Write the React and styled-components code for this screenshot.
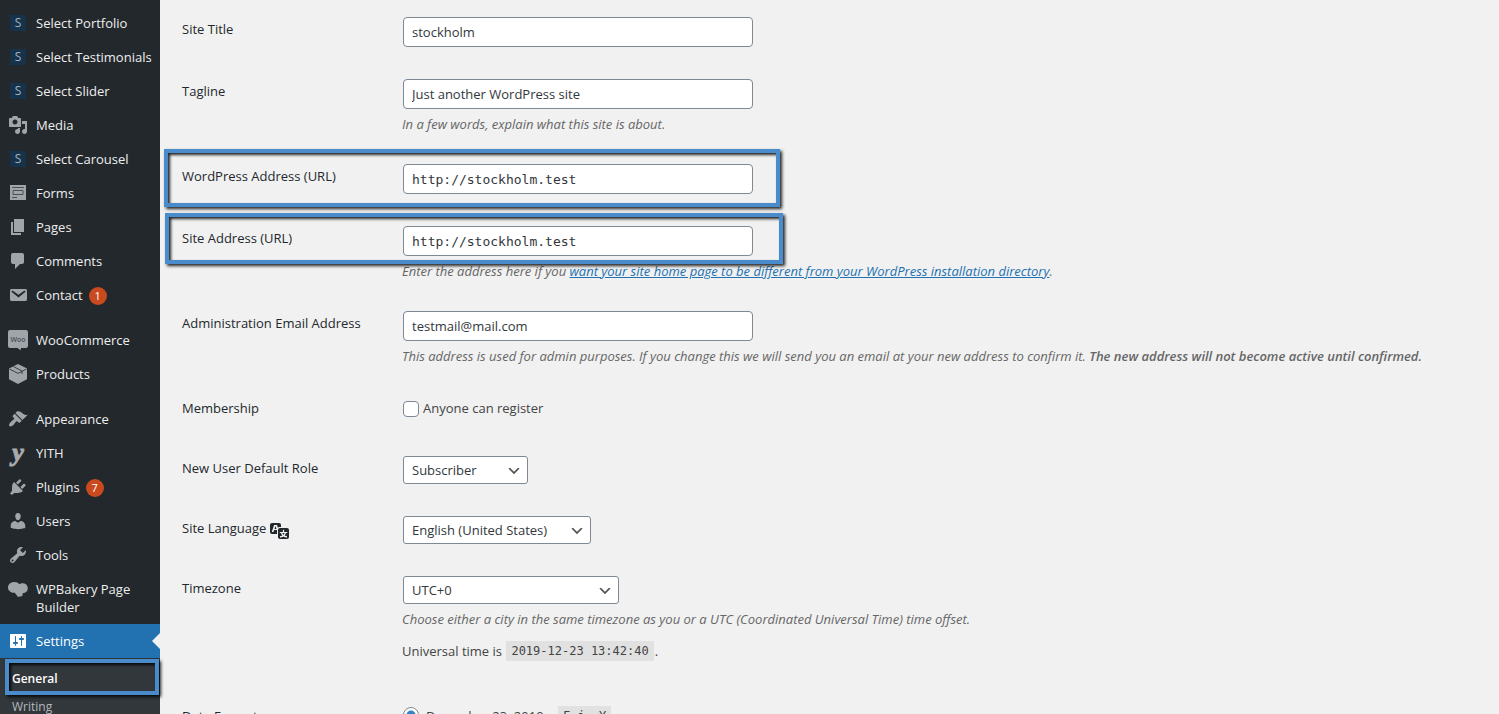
import React from 'react'
import styled, { createGlobalStyle, css } from 'styled-components'

const GlobalStyle = createGlobalStyle`
    *, *::before, *::after {
        box-sizing: border-box;
    }
    body {
        margin: 0;
        background: #f1f1f1;
        color: #444;
        font-family: "Open Sans", "Noto Sans", sans-serif;
        font-size: 13px;
        line-height: 18px;
    }
`;

const Page = styled.div`
    display: flex;
    height: 100vh;
    overflow: hidden;
`;

/* Sidebar */

const Sidebar = styled.nav`
    flex: 0 0 160px;
    padding-top: 6px;
    background: #23282d;
`;

const MenuList = styled.ul`
    margin: 0;
    padding: 0;
    list-style: none;
`;

const MenuItem = styled.li`
    margin-top: ${({$separated}) => ($separated ? "11px" : "0")};
`;

const MenuLink = styled.a`
    position: relative;
    display: flex;
    align-items: flex-start;
    padding: 8px 4px 8px 8px;
    color: ${({$active}) => ($active ? "#fff" : "#eee")};
    background: ${({$active}) => ($active ? "#2271b1" : "transparent")};
    text-decoration: none;
    ${({$active}) => $active && css`
        &::after {
            content: "";
            position: absolute;
            top: 9px;
            right: 0;
            border: 8px solid transparent;
            border-right-color: #f1f1f1;
            border-left-width: 0;
        }
    `}
`;

const MenuIcon = styled.span`
    display: flex;
    align-items: center;
    justify-content: center;
    flex: 0 0 20px;
    height: 18px;
    margin-right: 8px;
    color: ${({$active}) => ($active ? "#fff" : "#a0a5aa")};
`;

const SelectLogo = styled.span`
    width: 16px;
    height: 16px;
    background: #17324b;
    color: #a3b3bf;
    font-size: 12px;
    line-height: 16px;
    text-align: center;
`;

const YithLogo = styled.span`
    color: #a8abad;
    font-family: "Liberation Serif", serif;
    font-size: 26px;
    font-style: italic;
    font-weight: 700;
    line-height: 12px;
    -webkit-text-stroke: 1px #a8abad;
`;

const Badge = styled.span`
    flex: 0 0 18px;
    height: 18px;
    margin: 1px 0 -1px 6px;
    border-radius: 9px;
    background: #ca4a1f;
    color: #fff;
    font-size: 11px;
    line-height: 18px;
    text-align: center;
`;

const SubMenu = styled.ul`
    margin: 0;
    padding: 7px 0 8px;
    background: #32373c;
    list-style: none;
`;

const SubItem = styled.li`
    position: relative;
`;

const SubLink = styled.a`
    display: block;
    padding: 5px 12px;
    color: ${({$active}) => ($active ? "#fff" : "#b4b9be")};
    font-size: 12px;
    font-weight: ${({$active}) => ($active ? 600 : 400)};
    text-decoration: none;
`;

/* Frame laid over the parts that the reader has to look at */
const Highlight = styled.span`
    position: absolute;
    top: ${({$top}) => $top}px;
    left: ${({$left}) => $left}px;
    width: ${({$width}) => $width}px;
    height: ${({$height}) => $height}px;
    border: 4px solid #4a8bcb;
    box-shadow: 2px 2px 3px rgba(0, 0, 0, 0.85), inset 2px 2px 3px rgba(0, 0, 0, 0.85);
    pointer-events: none;
`;

/* Settings form */

const Form = styled.form`
    flex: 1;
    min-width: 0;
    padding: 1px 20px 0 22px;
`;

const Row = styled.div`
    position: relative;
    display: grid;
    grid-template-columns: 220px 1fr;
    padding: 15px 0;
`;

const Heading = styled.div`
    display: flex;
    align-items: flex-start;
    height: 17px;
    margin-top: 5px;
    color: #23282d;
    font-weight: 500;
    line-height: 17px;

    svg {
        flex: 0 0 20px;
        margin-left: 4px;
    }
`;

const Field = styled.div`
    min-width: 0;
    min-height: 30px;
`;

const TextInput = styled.input`
    display: block;
    width: 350px;
    max-width: 100%;
    height: 30px;
    margin: 1px;
    padding: 0 8px;
    border: 1px solid #7e8993;
    border-radius: 4px;
    background: #fff;
    color: #32373c;
    font-family: ${({$code}) => ($code ? '"DejaVu Sans Mono", monospace' : "inherit")};
    font-size: 13px;
`;

const Select = styled.select`
    display: block;
    width: ${({$width}) => $width}px;
    height: 28px;
    margin: 1px;
    padding: 0 24px 0 8px;
    appearance: none;
    border: 1px solid #7e8993;
    border-radius: 3px;
    background: #fff url('data:image/svg+xml;utf8,<svg xmlns="http://www.w3.org/2000/svg" viewBox="0 0 20 20"><path d="M5 6l5 5 5-5 2 1-7 7-7-7 2-1z" fill="%23555"/></svg>') no-repeat right 5px top 55%;
    background-size: 16px 16px;
    color: #32373c;
    font-family: inherit;
    font-size: 13px;
`;

const Description = styled.p`
    margin: 7px 0 0;
    color: #666;
    font-style: italic;
    line-height: 17px;

    a {
        color: #2271b1;
    }
    strong {
        font-weight: 600;
    }
`;

const TimeInfo = styled.p`
    margin: 13px 0 12px;
    line-height: 20px;
`;

const Code = styled.code`
    display: inline-block;
    height: 20px;
    margin: 0 1px;
    padding: 0 5px;
    background: #e1e1e1;
    font-family: "DejaVu Sans Mono", monospace;
    font-size: 12px;
    line-height: 20px;
    vertical-align: top;
`;

const Option = styled.label`
    display: flex;
    align-items: flex-start;
    padding-top: 3px;
    line-height: 20px;
`;

const Check = styled.input`
    width: 16px;
    height: 16px;
    margin: 3px 4px 0 1px;
    appearance: none;
    border: 1px solid #7e8993;
    border-radius: 4px;
    background: #fff;
`;

const Radio = styled(Check)`
    margin: 1px 7px 0 1px;
    border-radius: 50%;
    &:checked {
        background: radial-gradient(circle, #3582c4 4px, #fff 5px);
    }
`;

const DateText = styled.span`
    width: 131px;
`;

/* Icons */

const Icon = ({ children }) => (
    <svg width="20" height="20" viewBox="0 0 20 20" fill="currentColor" overflow="visible" aria-hidden="true">{children}</svg>
);

const icons = {
    select: <SelectLogo>S</SelectLogo>,
    yith: <YithLogo>y</YithLogo>,
    media: <Icon><path d="M13 11V4c0-.55-.45-1-1-1h-1.67L9 1H5L3.67 3H2c-.55 0-1 .45-1 1v7c0 .55.45 1 1 1h10c.55 0 1-.45 1-1zM7 4.5c1.38 0 2.5 1.12 2.5 2.5S8.38 9.5 7 9.5 4.5 8.38 4.5 7 5.62 4.5 7 4.5zM14 6h5v10.5c0 1.38-1.12 2.5-2.5 2.5S14 17.88 14 16.5s1.12-2.5 2.5-2.5c.17 0 .34.02.5.05V9h-3V6zm-4 8.05V13h2v3.5c0 1.38-1.12 2.5-2.5 2.5S7 17.88 7 16.5 8.12 14 9.5 14c.17 0 .34.02.5.05z" /></Icon>,
    forms: (
        <Icon>
            <path d="M2 2h16v15H2z" />
            <path d="M4 4.5h12M4 14.5h5" stroke="#4b5056" />
            <path d="M5 7.5h10v4H5z" fill="none" stroke="#4b5056" />
        </Icon>
    ),
    page: <Icon><path d="M6 15V2h10v13H6zm-1 1h8v2H3V5h2v11z" /></Icon>,
    comments: <Icon><path d="M5 2h9c1.1 0 2 .9 2 2v7c0 1.1-.9 2-2 2h-2l-5 5v-5H5c-1.1 0-2-.9-2-2V4c0-1.1.9-2 2-2z" /></Icon>,
    email: <Icon><path d="M3.87 4h13.25C18.37 4 19 4.59 19 5.79v8.42c0 1.19-.63 1.79-1.88 1.79H3.87c-1.25 0-1.88-.6-1.88-1.79V5.79c0-1.2.63-1.79 1.88-1.79zm6.62 8.6l6.74-5.53c.24-.2.43-.66.13-1.07-.29-.41-.82-.42-1.17-.17l-5.7 3.86L4.8 5.83c-.35-.25-.88-.24-1.17.17-.3.41-.11.87.13 1.07z" /></Icon>,
    woo: (
        <Icon>
            <path d="M2 0h16a2 2 0 0 1 2 2v14a2 2 0 0 1-2 2h-5l-.5 2.2L9.500 18H2a2 2 0 0 1-2-2V2a2 2 0 0 1 2-2z" />
            <text x="10" y="12" textAnchor="middle" fill="#4b5056" fontFamily="Open Sans" fontSize="7" fontWeight="600">Woo</text>
        </Icon>
    ),
    products: (
        <Icon>
            <path d="M10 0l9 4.6v10.6L10 20l-9-4.8V4.6z" />
            <path d="M1.500 5L10 9.400 18.500 5M5.500 2.600L14 7v3" fill="none" stroke="#3c4146" />
        </Icon>
    ),
    appearance: <Icon><path d="M14.48 11.06L7.41 3.99l1.5-1.5c.5-.56 2.3-.47 3.51.32 1.21.8 1.43 1.28 2.91 2.1 1.18.64 2.45 1.26 4.45.85zm-.71.71L6.7 4.7 4.93 6.47c-.39.39-.39 1.02 0 1.41l1.06 1.06c.39.39.39 1.03 0 1.42-.6.6-1.43 1.11-2.21 1.69-.35.26-.7.53-1.01.84C1.43 14.23.4 16.08 1.4 17.07c.99 1 2.84-.03 4.18-1.36.31-.31.58-.66.85-1.02.57-.78 1.08-1.61 1.69-2.21.39-.39 1.02-.39 1.41 0l1.06 1.06c.39.39 1.02.39 1.41 0z" /></Icon>,
    plugins: <Icon><path d="M13.11 4.36L9.87 7.6 8 5.73l3.24-3.24c.35-.34 1.05-.2 1.56.32.52.51.66 1.21.31 1.55zm-8 1.77l.91-1.12 9.01 9.01-1.19.84c-.71.71-2.63 1.16-3.82 1.16H6.14L4.9 17.26c-.59.59-1.54.59-2.12 0-.59-.58-.59-1.53 0-2.12l1.24-1.24v-3.88c0-1.13.4-3.19 1.09-3.89zm7.26 3.97l3.24-3.24c.34-.35 1.04-.21 1.55.31.52.51.66 1.21.31 1.55l-3.24 3.25z" /></Icon>,
    users: <Icon><path d="M10 9.25c-2.27 0-2.73-3.44-2.73-3.44C7 4.02 7.82 2 9.97 2c2.16 0 2.98 2.02 2.71 3.81 0 0-.41 3.44-2.68 3.44zm0 2.57L12.72 10c2.39 0 4.52 2.33 4.52 4.53v2.49s-3.65 1.13-7.24 1.13c-3.65 0-7.24-1.13-7.24-1.13v-2.49c0-2.25 1.94-4.48 4.47-4.48z" /></Icon>,
    tools: <Icon><path d="M16.68 9.77c-1.34 1.34-3.3 1.67-4.95.99l-5.41 6.52c-.99.99-2.59.99-3.58 0s-.99-2.59 0-3.57l6.52-5.42c-.68-1.65-.35-3.61.99-4.95 1.28-1.28 3.12-1.62 4.72-1.06l-2.89 2.89 2.82 2.82 2.86-2.87c.53 1.58.18 3.39-1.08 4.65zM3.81 16.21c.4.39 1.04.39 1.43 0 .4-.4.4-1.04 0-1.43-.39-.4-1.03-.4-1.43 0-.39.39-.39 1.03 0 1.43z" /></Icon>,
    bakery: <Icon><path d="M6.500 3c2 0 3.700.7 4.800 2.200.9-.6 1.900-.9 3-.9 3.200 0 5.500 2 5.500 4.900 0 2.700-2 4.800-5 5.100l-.5 2.700c-1.400.6-2.900.8-4.600.7L8 15.200C7.400 14.800 7 14.300 6.800 13.700 3 13.900 0 11.700 0 8.400 0 5.200 2.900 3 6.500 3z" /></Icon>,
    settings: <Icon><path d="M18 16V4c0-.55-.45-1-1-1H3c-.55 0-1 .45-1 1v12c0 .55.45 1 1 1h14c.55 0 1-.45 1-1zM8 11h1c.55 0 1 .45 1 1s-.45 1-1 1H8v1.5c0 .28-.22.5-.5.5s-.5-.22-.5-.5V13H6c-.55 0-1-.45-1-1s.45-1 1-1h1V5.500c0-.28.22-.5.5-.5s.5.22.5.5V11zm5-2h-1c-.55 0-1-.45-1-1s.45-1 1-1h1V5.500c0-.28.22-.5.5-.5s.5.22.5.5V7h1c.55 0 1 .45 1 1s-.45 1-1 1h-1v5.500c0 .28-.22.5-.5.5s-.5-.22-.5-.5V9z" /></Icon>,
    translation: <Icon><path d="M11 7H9.490c-.63 0-1.250.3-1.590.7L7 5H4.130l-2.390 7h1.690l.74-2H7v4H2c-1.100 0-2-.9-2-2V5c0-1.100.9-2 2-2h7c1.100 0 2 .9 2 2v2zM6.510 9H4.490l1-2.930zM10 8h7c1.100 0 2 .9 2 2v7c0 1.100-.9 2-2 2h-7c-1.100 0-2-.9-2-2v-7c0-1.100.9-2 2-2zm7.250 5v-1.080h-3.170V9.750h-1.160v2.170H9.750V13h1.280c.11.85.56 1.850 1.280 2.620-.87.36-1.890.62-2.310.62-.01.02.22.97.2 1.460.84 0 2.210-.5 3.280-1.150 1.090.65 2.480 1.150 3.340 1.150-.02-.49.2-1.440.2-1.460-.43 0-1.490-.27-2.380-.63.7-.77 1.140-1.770 1.250-2.610h1.360zm-3.810 1.930c-.5-.46-.85-1.130-1.010-1.930h2.090c-.17.8-.51 1.470-1 1.930l-.04.03s-.03-.02-.04-.03z" /></Icon>,
};

const menu = [
    { icon: "select", label: "Select Portfolio" },
    { icon: "select", label: "Select Testimonials" },
    { icon: "select", label: "Select Slider" },
    { icon: "media", label: "Media" },
    { icon: "select", label: "Select Carousel" },
    { icon: "forms", label: "Forms" },
    { icon: "page", label: "Pages" },
    { icon: "comments", label: "Comments" },
    { icon: "email", label: "Contact", count: 1 },
    { icon: "woo", label: "WooCommerce", separated: true },
    { icon: "products", label: "Products" },
    { icon: "appearance", label: "Appearance", separated: true },
    { icon: "yith", label: "YITH" },
    { icon: "plugins", label: "Plugins", count: 7 },
    { icon: "users", label: "Users" },
    { icon: "tools", label: "Tools" },
    { icon: "bakery", label: "WPBakery Page Builder" },
    { icon: "settings", label: "Settings", active: true },
];

const AdminMenu = () => (
    <Sidebar>
        <MenuList>
            {menu.map(({ icon, label, count, separated, active }) => (
                <MenuItem key={label} $separated={separated}>
                    <MenuLink href="#" $active={active}>
                        <MenuIcon $active={active}>{icons[icon]}</MenuIcon>
                        <span>{label}</span>
                        {count && <Badge>{count}</Badge>}
                    </MenuLink>
                </MenuItem>
            ))}
        </MenuList>
        <SubMenu>
            <SubItem>
                <SubLink href="#" $active>General</SubLink>
                <Highlight $top={-6} $left={5} $width={154} $height={36} />
            </SubItem>
            <SubItem>
                <SubLink href="#">Writing</SubLink>
            </SubItem>
        </SubMenu>
    </Sidebar>
)

const Setting = ({ id, label, icon, highlight, children }) => (
    <Row>
        <Heading>
            {id ? <label htmlFor={id}>{label}</label> : label}
            {icon}
        </Heading>
        <Field>{children}</Field>
        {highlight}
    </Row>
)

const App = () => {
    return (
        <Page>
            <GlobalStyle />
            <AdminMenu />
            <Form>
                <Setting id="title" label="Site Title">
                    <TextInput id="title" type="text" defaultValue="stockholm" />
                </Setting>
                <Setting id="tagline" label="Tagline">
                    <TextInput id="tagline" type="text" defaultValue="Just another WordPress site" />
                    <Description>In a few words, explain what this site is about.</Description>
                </Setting>
                <Setting
                    id="wpurl"
                    label="WordPress Address (URL)"
                    highlight={<Highlight $top={1} $left={-18} $width={616} $height={58} />}
                >
                    <TextInput id="wpurl" type="url" $code defaultValue="http://stockholm.test" />
                </Setting>
                <Setting
                    id="siteurl"
                    label="Site Address (URL)"
                    highlight={<Highlight $top={3} $left={-17} $width={618} $height={51} />}
                >
                    <TextInput id="siteurl" type="url" $code defaultValue="http://stockholm.test" />
                    <Description>
                        Enter the address here if you <a href="#">want your site home page to be different from your WordPress installation directory</a>.
                    </Description>
                </Setting>
                <Setting id="email" label="Administration Email Address">
                    <TextInput id="email" type="email" defaultValue="testmail@mail.com" />
                    <Description>
                        This address is used for admin purposes. If you change this we will send you an email at your new address to confirm it. <strong>The new address will not become active until confirmed.</strong>
                    </Description>
                </Setting>
                <Setting label="Membership">
                    <Option>
                        <Check type="checkbox" />
                        Anyone can register
                    </Option>
                </Setting>
                <Setting id="role" label="New User Default Role">
                    <Select id="role" $width={125}>
                        <option>Subscriber</option>
                    </Select>
                </Setting>
                <Setting id="language" label="Site Language" icon={icons.translation}>
                    <Select id="language" $width={188}>
                        <option>English (United States)</option>
                    </Select>
                </Setting>
                <Setting id="timezone" label="Timezone">
                    <Select id="timezone" $width={216}>
                        <option>UTC+0</option>
                    </Select>
                    <Description>Choose either a city in the same timezone as you or a UTC (Coordinated Universal Time) time offset.</Description>
                    <TimeInfo>
                        Universal time is <Code>2019-12-23 13:42:40</Code>.
                    </TimeInfo>
                </Setting>
                <Setting label="Date Format">
                    <Option>
                        <Radio type="radio" name="date" defaultChecked />
                        <DateText>December 23, 2019</DateText>
                        <Code>F j, Y</Code>
                    </Option>
                </Setting>
            </Form>
        </Page>
    )
}

export default App
